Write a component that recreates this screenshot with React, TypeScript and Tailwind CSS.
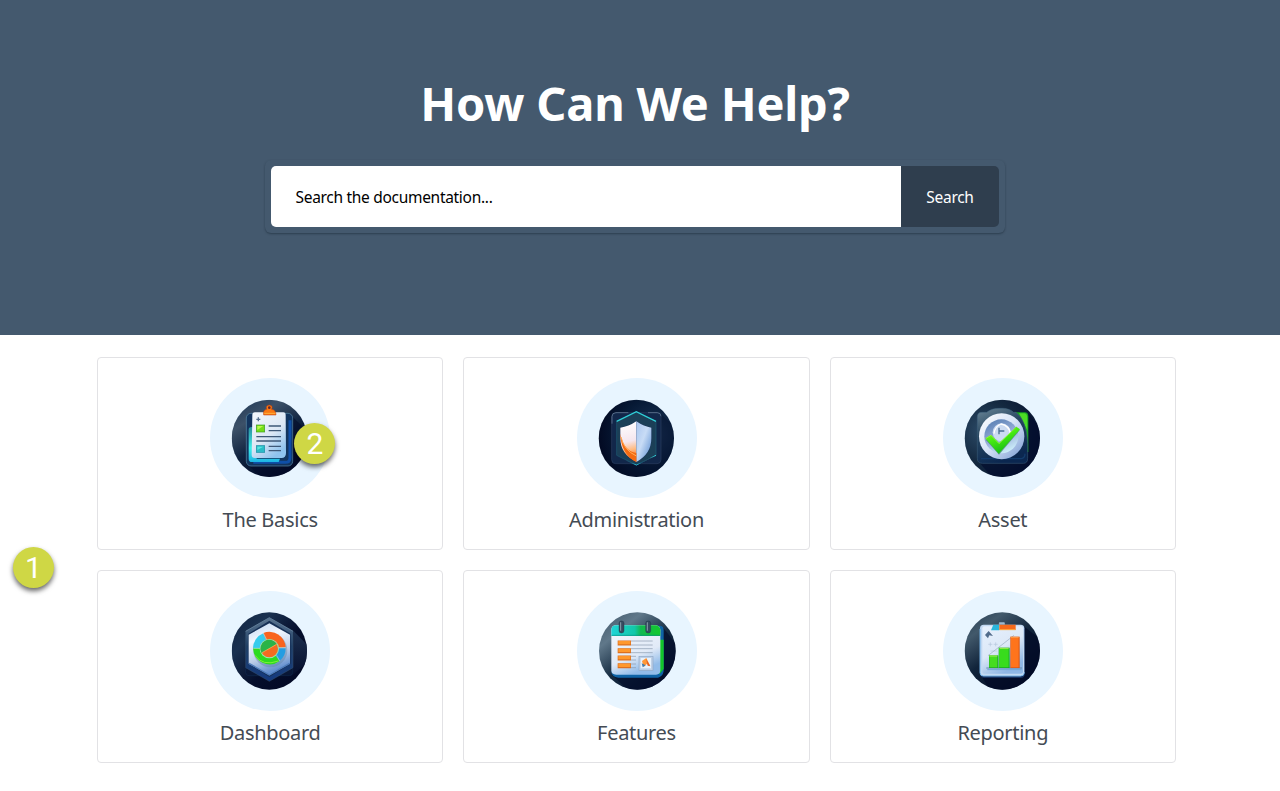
import type { ReactNode } from 'react';

function BasicsIcon() {
  return (
    <svg viewBox="30 23 360 360" className="block size-[120px]">
      <defs>
        <linearGradient id="basics-bg" x1="0" y1="0" x2="0.6" y2="1">
          <stop offset="0" stopColor="#1c3454" />
          <stop offset="0.3" stopColor="#3c5168" />
          <stop offset="0.6" stopColor="#10233f" />
          <stop offset="1" stopColor="#030a26" />
        </linearGradient>
        <linearGradient id="basics-paper" x1="0" y1="0" x2="0.6" y2="1">
          <stop offset="0" stopColor="#f4f8fc" />
          <stop offset="0.6" stopColor="#dce7f5" />
          <stop offset="1" stopColor="#8fc3ee" />
        </linearGradient>
        <linearGradient id="basics-glow" x1="0" y1="0" x2="0" y2="1">
          <stop offset="0" stopColor="#2c8c9c" />
          <stop offset="0.6" stopColor="#3cf0ea" />
          <stop offset="1" stopColor="#1fb4e4" />
        </linearGradient>
        <clipPath id="basics-clip"><ellipse cx="208" cy="204" rx="113" ry="116" /></clipPath>
      </defs>
      <g clipPath="url(#basics-clip)">
        <rect x="95" y="88" width="226" height="232" fill="url(#basics-bg)" />
        <path d="M139 280 L190 325 L330 325 L330 190 L278 140Z" fill="#030b29" opacity="0.6" />
        <rect x="139" y="129" width="139" height="158" rx="14" fill="#12345e" stroke="#5a8ba7" strokeWidth="2" />
        <path d="M270 150 V262 Q270 276 256 276 H160" fill="none" stroke="#0f4fa8" strokeWidth="9" />
        <path d="M146 178 Q146 170 154 170 H170 V265 H240 L236 275 H156 Q146 275 146 265Z" fill="url(#basics-glow)" />
        <path d="M165 126 H250 Q257 126 257 134 L258 248 Q258 263 244 263 H164 Q155 263 155 254 L157 134 Q157 126 165 126Z" fill="url(#basics-paper)" />
        <path d="M191 134 Q188 119 200 117 Q196 105 208 104 Q220 105 215 117 Q228 119 228 134Z" fill="#f87813" stroke="#b83b10" strokeWidth="1.5" />
        <circle cx="208" cy="112" r="4" fill="#5d2630" />
        <path d="M193 129 H226" stroke="#ffb03c" strokeWidth="3" />
        <path d="M175 141 V153 M169 147 H181" stroke="#56708f" strokeWidth="4" />
        <rect x="169" y="164" width="25" height="21" fill="#73dd19" stroke="#3c9b23" strokeWidth="2" />
        <path d="M172 167 H190 L172 179Z" fill="#b9f84b" />
        <rect x="169" y="226" width="25" height="20" fill="#2abbc7" stroke="#168da5" strokeWidth="2" />
        <path d="M172 229 H190 L172 239Z" fill="#58e4dd" />
        <path d="M206 167 H243 M206 181 H243 M169 199 H243 M169 212 H243 M206 228 H243 M206 241 H243" stroke="#3e5878" strokeWidth="4" />
      </g>
    </svg>
  );
}

function AdministrationIcon() {
  return (
    <svg viewBox="51 23 360 360" className="block size-[120px]">
      <defs>
        <radialGradient id="admin-bg" cx="0.72" cy="0.45" r="0.75">
          <stop offset="0" stopColor="#1c3659" />
          <stop offset="0.6" stopColor="#071a36" />
          <stop offset="1" stopColor="#020820" />
        </radialGradient>
        <linearGradient id="admin-edge" x1="0" y1="0" x2="0" y2="1">
          <stop offset="0" stopColor="#2fd8df" />
          <stop offset="0.35" stopColor="#24485f" />
          <stop offset="0.75" stopColor="#18526e" />
          <stop offset="1" stopColor="#28c4dc" />
        </linearGradient>
        <linearGradient id="admin-right" x1="0" y1="0" x2="1" y2="1">
          <stop offset="0" stopColor="#a9c5ee" />
          <stop offset="0.45" stopColor="#c8dcf6" />
          <stop offset="1" stopColor="#5489ce" />
        </linearGradient>
        <linearGradient id="admin-left" x1="0.4" y1="0" x2="0.5" y2="1">
          <stop offset="0" stopColor="#ffffff" />
          <stop offset="0.5" stopColor="#f5e6ee" />
          <stop offset="0.72" stopColor="#ffba80" />
          <stop offset="1" stopColor="#f45a09" />
        </linearGradient>
        <clipPath id="admin-clip"><ellipse cx="229" cy="204" rx="113" ry="116" /></clipPath>
      </defs>
      <g clipPath="url(#admin-clip)">
        <rect x="115" y="87" width="228" height="234" fill="url(#admin-bg)" />
        <path d="M154 280 L210 325 H345 V170 L302 130Z" fill="#020c27" opacity="0.4" />
        <rect x="155" y="127" width="148" height="153" rx="12" fill="#12274a" stroke="#2b3d5d" strokeWidth="2" />
        <path d="M156 160 V139 Q156 127 168 127 H205 M264 127 H292 Q303 127 303 138" fill="none" stroke="#7087a0" strokeWidth="2" />
        <path d="M229 123 L288 152 V255 L229 284 L170 255 V152Z" fill="#1b3f57" />
        <path d="M288 152 V255 L229 284 L170 255 V152" fill="none" stroke="#1d5a73" strokeWidth="2" />
        <path d="M170 153 L229 124 L288 153" fill="none" stroke="#2fd0d8" strokeWidth="4" />
        <path d="M200 270 L229 284 L288 255" fill="none" stroke="url(#admin-edge)" strokeWidth="3" />
        <path d="M229 152 Q252 168 275 171 V205 Q275 250 229 276 Q180 249 180 205 V171 Q207 168 229 152Z" fill="#20365c" />
        <path d="M229 153 Q206 169 181 172 V204 Q181 252 229 275Z" fill="url(#admin-left)" />
        <path d="M229 153 Q252 169 274 172 V204 Q274 251 229 275Z" fill="url(#admin-right)" />
        <path d="M181 190 Q182 249 229 275 V248 Q191 242 181 190Z" fill="#f46b12" />
        <path d="M183 200 Q191 239 229 257" fill="none" stroke="#ffad59" strokeWidth="3" />
      </g>
    </svg>
  );
}

function AssetIcon() {
  return (
    <svg viewBox="39 23 360 360" className="block size-[120px]">
      <defs>
        <radialGradient id="asset-bg" cx="0.25" cy="0.4" r="0.9">
          <stop offset="0" stopColor="#2c4b68" />
          <stop offset="0.45" stopColor="#142940" />
          <stop offset="1" stopColor="#020a29" />
        </radialGradient>
        <linearGradient id="asset-case" x1="0" y1="0" x2="0.4" y2="1">
          <stop offset="0" stopColor="#6c8798" />
          <stop offset="0.45" stopColor="#274660" />
          <stop offset="1" stopColor="#0b2750" />
        </linearGradient>
        <linearGradient id="asset-ring" x1="0" y1="0" x2="1" y2="1">
          <stop offset="0" stopColor="#ffffff" />
          <stop offset="0.5" stopColor="#d5e2f6" />
          <stop offset="1" stopColor="#7799d1" />
        </linearGradient>
        <linearGradient id="asset-dial" x1="0.2" y1="0" x2="0.7" y2="1">
          <stop offset="0" stopColor="#577fb3" />
          <stop offset="0.55" stopColor="#9bb0da" />
          <stop offset="1" stopColor="#d0f3fc" />
        </linearGradient>
        <linearGradient id="asset-check" x1="0" y1="0" x2="0.5" y2="1">
          <stop offset="0" stopColor="#94f91e" />
          <stop offset="0.5" stopColor="#45e912" />
          <stop offset="1" stopColor="#13b916" />
        </linearGradient>
        <clipPath id="asset-clip"><ellipse cx="217" cy="204" rx="113" ry="116" /></clipPath>
      </defs>
      <g clipPath="url(#asset-clip)">
        <rect x="103" y="87" width="228" height="234" fill="url(#asset-bg)" />
        <path d="M144 272 L190 325 H335 V180 L295 128Z" fill="#020b2c" opacity="0.65" />
        <path d="M255 126 H284 Q295 126 295 139 V245 H278Z" fill="#17a81f" />
        <path d="M267 129 H284 Q292 130 292 145 V180Z" fill="#4cdb25" />
        <path d="M142 140 Q142 126 155 126 H170 Q186 113 211 114 Q235 112 251 126 H258 Q290 150 293 220 V264 Q293 279 280 279 H157 Q142 279 142 264Z" fill="url(#asset-case)" stroke="#3f627e" strokeWidth="1.5" />
        <path d="M153 265 H274 Q285 263 285 250" fill="none" stroke="#133b6c" strokeWidth="4" />
        <ellipse cx="215" cy="198" rx="68" ry="69" fill="url(#asset-ring)" />
        <circle cx="214" cy="198" r="51" fill="url(#asset-dial)" />
        <circle cx="215" cy="186" r="27" fill="#ccdbf2" />
        <path d="M192 190 Q194 169 213 161 Q237 166 241 188" fill="none" stroke="#fff" strokeWidth="4" />
        <path d="M207 172 V192 M207 182 H223" stroke="#496d92" strokeWidth="4" />
        <path d="M168 209 L184 198 L208 222 L258 169 L269 180 L207 253Z" fill="#16703c" opacity="0.55" />
        <path d="M166 204 L183 193 L207 218 L259 169 L270 177 L206 250Z" fill="url(#asset-check)" />
        <path d="M167 205 L183 195 L207 220 L259 170" fill="none" stroke="#a8fc4a" strokeWidth="2" />
      </g>
    </svg>
  );
}

function DashboardIcon() {
  return (
    <svg viewBox="30 18 360 360" className="block size-[120px]">
      <defs>
        <linearGradient id="dash-bg" x1="0" y1="0" x2="1" y2="0.9">
          <stop offset="0" stopColor="#10213e" />
          <stop offset="0.28" stopColor="#1a3150" />
          <stop offset="0.6" stopColor="#050e2b" />
          <stop offset="1" stopColor="#020824" />
        </linearGradient>
        <linearGradient id="dash-light" x1="0" y1="0" x2="0" y2="1">
          <stop offset="0" stopColor="#1c3050" />
          <stop offset="1" stopColor="#060f2d" />
        </linearGradient>
        <linearGradient id="dash-shell" x1="0" y1="0" x2="0" y2="1">
          <stop offset="0" stopColor="#5b7590" />
          <stop offset="0.45" stopColor="#1f3f66" />
          <stop offset="1" stopColor="#143a80" />
        </linearGradient>
        <linearGradient id="dash-face" x1="0" y1="0" x2="0.3" y2="1">
          <stop offset="0" stopColor="#bed6f1" />
          <stop offset="0.35" stopColor="#f0f6ff" />
          <stop offset="0.7" stopColor="#bdcee8" />
          <stop offset="1" stopColor="#6490cf" />
        </linearGradient>
        <clipPath id="dash-clip"><ellipse cx="208" cy="198" rx="113" ry="116" /></clipPath>
      </defs>
      <g clipPath="url(#dash-clip)">
        <rect x="95" y="81" width="228" height="234" fill="url(#dash-bg)" />
        <path d="M280 137 L325 183 V230 L278 270Z" fill="url(#dash-light)" />
        <path d="M137 250 V263 Q137 272 147 272 H268 Q278 272 278 263 V250Z" fill="#091736" stroke="#173965" />
        <path d="M208 98 L279 138 V248 L208 289 L137 248 V138Z" fill="url(#dash-shell)" stroke="#35506f" strokeWidth="1.5" />
        <path d="M137 139 L208 98 L279 139" fill="none" stroke="#7390a9" strokeWidth="2" />
        <path d="M208 107 L272 146 V236 L208 276 L145 236 V146Z" fill="#163056" />
        <path d="M208 115 L270 149 V236 L208 271 L146 236 V149Z" fill="url(#dash-face)" />
        <path d="M147 235 L208 270 L269 235" fill="none" stroke="#4d7ab9" strokeWidth="4" />
        <circle cx="211" cy="196" r="51" fill="#577b9c" opacity="0.35" />
        <path d="M208 190 L159 190 A49 49 0 0 1 190 145Z" fill="#36cced" />
        <path d="M208 190 L190 144 A49 49 0 0 1 257 187Z" fill="#f8641e" />
        <path d="M208 190 H257 A49 49 0 0 1 239 228Z" fill="#249de2" />
        <path d="M208 190 L239 228 A50 50 0 0 1 159 190Z" fill="#2cdb20" />
        <path d="M165 211 Q188 245 235 228" fill="none" stroke="#7df036" strokeWidth="3" />
        <circle cx="208" cy="191" r="29" fill="#96e6ad" />
        <circle cx="208" cy="191" r="26" fill="#f36b21" />
        <path d="M185 204 A26 26 0 0 1 230 177Z" fill="#2ab448" />
        <path d="M186 203 L230 178" stroke="#ffbd64" strokeWidth="2" />
        <path d="M190 144 L200 164 M236 188 H257 M230 211 L239 228 M160 190 H180" stroke="#b9dbda" strokeWidth="2" />
      </g>
    </svg>
  );
}

function FeaturesIcon() {
  return (
    <svg viewBox="51 18 360 360" className="block size-[120px]">
      <defs>
        <linearGradient id="feat-bg" x1="0" y1="0" x2="0.8" y2="1">
          <stop offset="0" stopColor="#3d5366" />
          <stop offset="0.28" stopColor="#60788a" />
          <stop offset="0.58" stopColor="#152b41" />
          <stop offset="1" stopColor="#030b29" />
        </linearGradient>
        <linearGradient id="feat-head" x1="0" y1="0" x2="1" y2="0">
          <stop offset="0" stopColor="#20d4d7" />
          <stop offset="0.48" stopColor="#12c7a8" />
          <stop offset="0.6" stopColor="#12b850" />
          <stop offset="1" stopColor="#13c92c" />
        </linearGradient>
        <linearGradient id="feat-paper" x1="0" y1="0" x2="0.4" y2="1">
          <stop offset="0" stopColor="#f4f8fd" />
          <stop offset="0.7" stopColor="#e1eaf7" />
          <stop offset="1" stopColor="#92bce9" />
        </linearGradient>
        <clipPath id="feat-clip"><ellipse cx="232" cy="198" rx="115" ry="116" /></clipPath>
      </defs>
      <g clipPath="url(#feat-clip)">
        <rect x="116" y="81" width="233" height="234" fill="url(#feat-bg)" />
        <path d="M155 269 L210 320 H350 V180 L311 130Z" fill="#020b29" opacity="0.6" />
        <path d="M284 122 H301 Q311 123 311 136 V259 Q308 275 294 278 H175 Q155 277 154 258 L290 260Z" fill="#0e63a6" />
        <path d="M294 164 H311 V252 L298 268Z" fill="#13c529" />
        <path d="M154 135 Q154 121 168 121 H287 Q301 122 301 136 V256 Q301 269 288 269 H169 Q154 269 154 256Z" fill="url(#feat-paper)" />
        <path d="M154 153 V135 Q154 121 168 121 H287 Q301 122 301 136 V153Z" fill="url(#feat-head)" />
        <path d="M155 151 H300" stroke="#0b9183" strokeWidth="2" />
        <rect x="177" y="108" width="15" height="36" rx="7" fill="#364b60" stroke="#172a39" />
        <rect x="257" y="108" width="15" height="36" rx="7" fill="#364b60" stroke="#172a39" />
        <path d="M182 113 V136 M262 113 V136" stroke="#8ba1ac" strokeWidth="3" strokeLinecap="round" />
        <path d="M213 168 H278 M213 180 H278 M213 191 H278 M213 203 H278 M213 214 H228 M213 225 H228 M213 237 H228 M213 248 H228" stroke="#8899ad" strokeWidth="2" />
        <path d="M173 174 H213 M173 197 H213 M173 219 H213 M173 242 H213" stroke="#dd7020" strokeWidth="15" />
        <path d="M175 173 H211 M175 196 H211 M175 218 H211 M175 241 H211" stroke="#ff982d" strokeWidth="10" />
        <rect x="237" y="214" width="42" height="42" fill="#bed0e7" stroke="#91a9c7" strokeWidth="2" />
        <rect x="242" y="219" width="31" height="31" fill="#e8f2fc" />
        <path d="M246 228 L259 219 L271 243 L260 237 L251 246Z" fill="#ff9838" />
        <path d="M245 235 L257 241 L248 247Z" fill="#417baf" />
        <path d="M258 221 L271 244 L263 242Z" fill="#e66126" />
      </g>
    </svg>
  );
}

function ReportingIcon() {
  return (
    <svg viewBox="39 18 360 360" className="block size-[120px]">
      <defs>
        <linearGradient id="rep-bg" x1="0" y1="0" x2="0.7" y2="1">
          <stop offset="0" stopColor="#23394e" />
          <stop offset="0.25" stopColor="#42596b" />
          <stop offset="0.55" stopColor="#11243b" />
          <stop offset="1" stopColor="#020923" />
        </linearGradient>
        <linearGradient id="rep-paper" x1="0" y1="0" x2="0.5" y2="1">
          <stop offset="0" stopColor="#e7f1fd" />
          <stop offset="0.55" stopColor="#dce8f7" />
          <stop offset="1" stopColor="#8fb6e5" />
        </linearGradient>
        <clipPath id="rep-clip"><ellipse cx="217" cy="198" rx="113" ry="116" /></clipPath>
      </defs>
      <g clipPath="url(#rep-clip)">
        <rect x="103" y="81" width="228" height="234" fill="url(#rep-bg)" />
        <path d="M152 270 L185 322 H340 V170 L283 125Z" fill="#020a27" opacity="0.7" />
        <rect x="151" y="121" width="133" height="158" rx="12" fill="#152f5e" />
        <rect x="150" y="119" width="133" height="154" rx="11" fill="#c3d9f2" />
        <rect x="157" y="124" width="122" height="142" rx="6" fill="url(#rep-paper)" />
        <path d="M150 132 V263 Q150 273 160 273 H272 Q283 273 283 262" fill="none" stroke="#79b5e8" strokeWidth="3" />
        <path d="M208 119 V113 H223 V119" fill="#99b8d1" stroke="#aac9de" strokeWidth="2" />
        <path d="M190 119 H208 V136 H183Z" fill="#2ab6dc" />
        <path d="M208 119 H257 V135 H208Z" fill="#f56a1b" />
        <path d="M209 134 H257" stroke="#ffad43" strokeWidth="3" />
        <path d="M176 138 L189 153 L178 151 L174 160 L165 150Z" fill="#526c8b" />
        <path d="M181 172 V184 M175 178 H187 M197 172 V184 M191 178 H203 M181 198 H202" stroke="#b5c7dd" strokeWidth="2" />
        <path d="M174 212 L252 151" stroke="#99abc0" strokeWidth="2" />
        <path d="M169 249 H276" stroke="#6587aa" strokeWidth="3" />
        <rect x="177" y="211" width="28" height="38" fill="#1da42c" />
        <rect x="178" y="212" width="24" height="35" fill="#46dc20" />
        <rect x="206" y="188" width="33" height="61" fill="#13a428" />
        <rect x="207" y="190" width="29" height="57" fill="#38dc1c" />
        <rect x="241" y="155" width="28" height="94" fill="#da5412" />
        <rect x="243" y="157" width="23" height="90" fill="#ff741c" />
        <path d="M178 213 H202 M209 190 H236" stroke="#a4ef50" strokeWidth="3" />
        <path d="M242 157 H266" stroke="#ffa250" strokeWidth="3" />
        <path d="M172 254 H275" stroke="#71a5d6" strokeWidth="3" />
      </g>
    </svg>
  );
}

function Marker({ children }: { children: ReactNode }) {
  return (
    <span className="flex size-[41px] items-center justify-center rounded-full bg-[#cfd745] font-['Roboto',sans-serif] text-[30px] leading-none text-white shadow-[0_3px_5px_rgba(0,0,0,0.6)]">
      {children}
    </span>
  );
}

type Topic = { title: string; icon: ReactNode; marker?: string };

const topics: Topic[] = [
  { title: 'The Basics', icon: <BasicsIcon />, marker: '2' },
  { title: 'Administration', icon: <AdministrationIcon /> },
  { title: 'Asset', icon: <AssetIcon /> },
  { title: 'Dashboard', icon: <DashboardIcon /> },
  { title: 'Features', icon: <FeaturesIcon /> },
  { title: 'Reporting', icon: <ReportingIcon /> },
];

function TopicCard({ title, icon, marker }: Topic) {
  return (
    <a className="flex h-[193px] flex-col items-center rounded-[4px] border border-[#e2e2e5] bg-white pt-5 pl-[0.5px]">
      <div className="relative size-[120px] rounded-full bg-[#e8f5ff]">
        {icon}
        {marker && (
          <div className="absolute top-[45px] left-[84px]">
            <Marker>{marker}</Marker>
          </div>
        )}
      </div>
      <h2 className="mt-[7px] mr-[0.5px] text-[20px] leading-[30px] tracking-[-0.3px] whitespace-nowrap text-[#444b54]">{title}</h2>
    </a>
  );
}

export default function App() {
  return (
    <div className="relative h-[791px] overflow-hidden bg-white font-['Noto_Sans','Open_Sans',sans-serif]">
      <header className="flex h-[335px] flex-col items-center bg-[#44596e] pt-[71px] pr-[10px]">
        <h1 className="text-[47px] leading-[64px] font-bold tracking-[-0.2px] whitespace-nowrap text-white">How Can We Help?</h1>
        <form className="mt-[25px] flex h-[73px] w-[740px] rounded-[6px] p-[6px] shadow-[0_1px_2px_rgba(20,35,50,0.5)]">
          <div className="flex h-[61px] flex-1 items-center rounded-l-[5px] bg-white pt-[2px] pl-[24.5px] text-[15.5px] tracking-[-0.3px] text-black">
            Search the documentation...
          </div>
          <button type="button" className="h-[61px] w-[98px] rounded-r-[5px] bg-[#2f3e4e] pt-[2px] text-[15.5px] tracking-[-0.3px] text-white">
            Search
          </button>
        </form>
      </header>
      <main className="mt-[22px] mr-[104px] ml-[97px] grid grid-cols-3 gap-5">
        {topics.map((topic) => (
          <TopicCard key={topic.title} {...topic} />
        ))}
      </main>
      <div className="absolute top-[547px] left-[13px]">
        <Marker>1</Marker>
      </div>
    </div>
  );
}
